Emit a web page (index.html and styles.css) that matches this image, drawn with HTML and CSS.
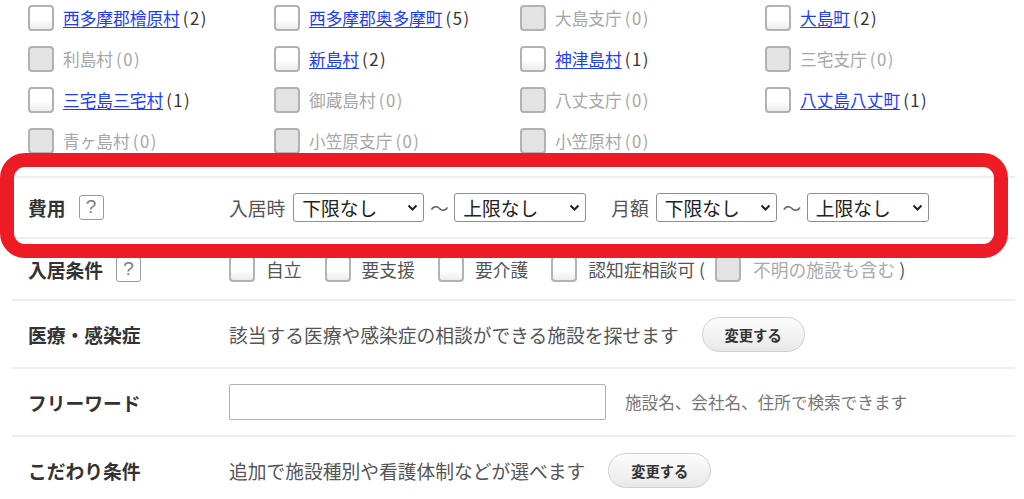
FILE: index.html
```html
<!DOCTYPE html>
<html lang="ja">
<head>
  <meta charset="UTF-8" />
  <title>検索条件</title>
  <meta name="viewport" content="width=device-width, initial-scale=1" />
  <link rel="stylesheet" href="styles.css">
</head>
<body>
  <div class="page">
    <ul class="areas">
      <li class="area"><span class="check"></span><a href="#">西多摩郡檜原村</a><span class="count">(2)</span></li>
      <li class="area"><span class="check"></span><a href="#">西多摩郡奥多摩町</a><span class="count">(5)</span></li>
      <li class="area off"><span class="check"></span><span>大島支庁</span><span class="count">(0)</span></li>
      <li class="area"><span class="check"></span><a href="#">大島町</a><span class="count">(2)</span></li>

      <li class="area off"><span class="check"></span><span>利島村</span><span class="count">(0)</span></li>
      <li class="area"><span class="check"></span><a href="#">新島村</a><span class="count">(2)</span></li>
      <li class="area"><span class="check"></span><a href="#">神津島村</a><span class="count">(1)</span></li>
      <li class="area off"><span class="check"></span><span>三宅支庁</span><span class="count">(0)</span></li>

      <li class="area"><span class="check"></span><a href="#">三宅島三宅村</a><span class="count">(1)</span></li>
      <li class="area off"><span class="check"></span><span>御蔵島村</span><span class="count">(0)</span></li>
      <li class="area off"><span class="check"></span><span>八丈支庁</span><span class="count">(0)</span></li>
      <li class="area"><span class="check"></span><a href="#">八丈島八丈町</a><span class="count">(1)</span></li>

      <li class="area off"><span class="check"></span><span>青ヶ島村</span><span class="count">(0)</span></li>
      <li class="area off"><span class="check"></span><span>小笠原支庁</span><span class="count">(0)</span></li>
      <li class="area off"><span class="check"></span><span>小笠原村</span><span class="count">(0)</span></li>
    </ul>

    <div class="search-table">
      <div class="search-row row-cost">
        <div class="row-label">費用<span class="help">?</span></div>
        <div class="row-body">
          <span class="cost-name">入居時</span>
          <span class="select-wrap w131">
            <select><option>下限なし</option></select>
            <svg class="chev" width="11" height="7" viewBox="0 0 11 7"><path d="M1.5 1.5l4 4 4-4" fill="none" stroke="#222" stroke-width="2"/></svg>
          </span>
          <span class="tilde">～</span>
          <span class="select-wrap w132">
            <select><option>上限なし</option></select>
            <svg class="chev" width="11" height="7" viewBox="0 0 11 7"><path d="M1.5 1.5l4 4 4-4" fill="none" stroke="#222" stroke-width="2"/></svg>
          </span>
          <span class="cost-name monthly">月額</span>
          <span class="select-wrap w121">
            <select><option>下限なし</option></select>
            <svg class="chev" width="11" height="7" viewBox="0 0 11 7"><path d="M1.5 1.5l4 4 4-4" fill="none" stroke="#222" stroke-width="2"/></svg>
          </span>
          <span class="tilde">～</span>
          <span class="select-wrap w122">
            <select><option>上限なし</option></select>
            <svg class="chev" width="11" height="7" viewBox="0 0 11 7"><path d="M1.5 1.5l4 4 4-4" fill="none" stroke="#222" stroke-width="2"/></svg>
          </span>
        </div>
      </div>

      <div class="search-row row-cond">
        <div class="row-label">入居条件<span class="help">?</span></div>
        <div class="row-body">
          <label class="cond"><span class="check"></span>自立</label>
          <label class="cond"><span class="check"></span>要支援</label>
          <label class="cond"><span class="check"></span>要介護</label>
          <label class="cond last"><span class="check"></span>認知症相談可 (</label>
          <label class="cond sub"><span class="check off"></span><span class="muted">不明の施設も含む</span></label>
          <span class="paren">)</span>
        </div>
      </div>

      <div class="search-row">
        <div class="row-label">医療・感染症</div>
        <div class="row-body">
          <span class="desc">該当する医療や感染症の相談ができる施設を探せます</span>
          <button class="change-btn">変更する</button>
        </div>
      </div>

      <div class="search-row">
        <div class="row-label">フリーワード</div>
        <div class="row-body">
          <input type="text" class="keyword" />
          <span class="hint">施設名、会社名、住所で検索できます</span>
        </div>
      </div>

      <div class="search-row">
        <div class="row-label">こだわり条件</div>
        <div class="row-body">
          <span class="desc">追加で施設種別や看護体制などが選べます</span>
          <button class="change-btn">変更する</button>
        </div>
      </div>
    </div>

    <div class="highlight"></div>
  </div>
</body>
</html>
```

FILE: styles.css
```css
body {
  margin: 0;
  font-family: "Noto Sans CJK JP", "Noto Sans", sans-serif;
  color: #333;
  background: #fff;
}
.page {
  position: relative;
  overflow: hidden;
  height: 499px;
}

/* area checkboxes */
.areas {
  list-style: none;
  margin: 0;
  padding: 5px 0 22px 28px;
  display: grid;
  grid-template-columns: 246px 246px 245px 246px;
  row-gap: 15px;
}
.area {
  display: flex;
  align-items: center;
  height: 26px;
  font-size: 16.7px;
  white-space: nowrap;
}
.area a {
  color: #1a3cff;
  text-decoration: underline;
  text-underline-offset: 2px;
  margin-left: 9px;
}
.area .count {
  margin-left: 3px;
  letter-spacing: 1.5px;
  color: #333;
}
.area.off span {
  color: #a6a6a6;
}
.area.off span:nth-child(2) {
  margin-left: 9px;
}
.check {
  flex: none;
  display: inline-block;
  box-sizing: border-box;
  width: 26px;
  height: 26px;
  border: 2px solid #b2b2b2;
  border-radius: 4px;
  background: linear-gradient(#fff 55%, #ececec);
}
.area.off .check,
.check.off {
  background: #e3e3e3;
}

/* search table */
.search-table {
  margin: 0 9px 0 12px;
}
.search-row {
  box-sizing: border-box;
  display: flex;
  align-items: center;
  height: 68px;
  border-top: 2px solid #eeeeee;
  padding-left: 16px;
}
.row-cost {
  height: 61px;
}
.row-cond {
  height: 62px;
}
.row-label {
  flex: none;
  width: 201px;
  display: flex;
  align-items: center;
  font-size: 18.75px;
  font-weight: bold;
  color: #333;
}
.help {
  box-sizing: border-box;
  width: 25px;
  height: 25px;
  margin-left: 13px;
  border: 1.5px solid #9a9a9a;
  border-radius: 3px;
  color: #7a7a7a;
  font-size: 19px;
  font-weight: normal;
  line-height: 21px;
  text-align: center;
  font-family: "Liberation Sans", sans-serif;
}
.row-body {
  display: flex;
  align-items: center;
  font-size: 18.75px;
  color: #555;
  white-space: nowrap;
}

/* cost selects */
.cost-name {
  margin-right: 8px;
}
.cost-name.monthly {
  margin-left: 25px;
  margin-right: 7px;
}
.tilde {
  width: 30px;
  text-align: center;
  color: #666;
}
.select-wrap {
  position: relative;
  display: inline-block;
  height: 29px;
}
.select-wrap select {
  appearance: none;
  box-sizing: border-box;
  width: 100%;
  height: 29px;
  border: 1px solid #8f8f8f;
  border-radius: 3px;
  background: #fff;
  padding: 0 0 0 8px;
  font-family: inherit;
  font-size: 18.75px;
  color: #222;
}
.select-wrap .chev {
  position: absolute;
  right: 6px;
  top: 11px;
  pointer-events: none;
}
.w131 { width: 131px; }
.w132 { width: 132px; }
.w121 { width: 121px; }
.w122 { width: 122px; }

/* conditions */
.cond {
  display: flex;
  align-items: center;
  margin-right: 23px;
  font-size: 17.8px;
  color: #555;
}
.cond .check {
  margin-right: 11px;
}
.cond.last {
  margin-right: 10px;
}
.cond.sub {
  margin-right: 4px;
}
.cond.sub .check {
  margin-right: 12px;
}
.muted {
  color: #aaa;
}
.paren {
  font-size: 18px;
  color: #555;
}

/* description + buttons */
.desc {
  color: #555;
}
.change-btn {
  box-sizing: border-box;
  width: 103px;
  height: 35px;
  margin-left: 23px;
  border: 1px solid #cfcfcf;
  border-radius: 18px;
  background: linear-gradient(#fdfdfd, #e8e8e8);
  font-family: inherit;
  font-size: 14.3px;
  font-weight: bold;
  color: #333;
  cursor: pointer;
}
.keyword {
  box-sizing: border-box;
  width: 377px;
  height: 36px;
  border: 1.5px solid #b0b0b0;
  border-radius: 2px;
  outline: none;
}
.hint {
  margin-left: 19px;
  font-size: 16.6px;
  color: #777;
}

/* red annotation frame */
.highlight {
  position: absolute;
  left: 0;
  top: 153px;
  box-sizing: border-box;
  width: 1008px;
  height: 105px;
  border: 14px solid #ed1c24;
  border-radius: 25px;
  pointer-events: none;
}
```
